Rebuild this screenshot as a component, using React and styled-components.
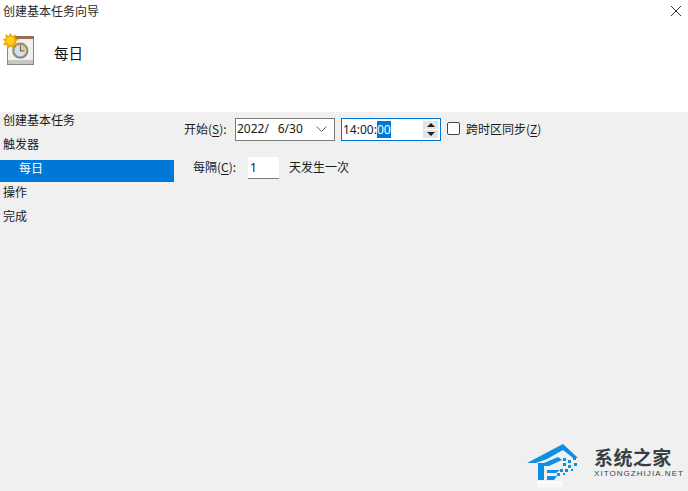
import styled, { createGlobalStyle } from 'styled-components';

const GlobalStyle = createGlobalStyle`
  html, body { margin: 0; padding: 0; background: #f0f0f0; }
  body { font-family: "Noto Sans CJK SC", "Liberation Sans", sans-serif; font-size: 12px; color: #1a1a1a; }
`;

const LATIN = '"Noto Sans", "Noto Sans CJK SC", sans-serif';

const Page = styled.div`
  position: relative;
  width: 688px;
  height: 491px;
  overflow: hidden;
  display: flex;
  flex-direction: column;
`;

const Header = styled.header`
  height: 112px;
  flex: none;
  background: #fff;
  padding: 2px 6px 0 3px;
  box-sizing: border-box;
`;

const TitleBar = styled.div`
  height: 18px;
  display: flex;
  align-items: center;
  justify-content: space-between;
`;

const Title = styled.span`
  font-size: 12px;
  line-height: 16px;
  color: #2b2b2b;
`;

const CloseButton = styled.button`
  width: 12px;
  height: 12px;
  padding: 0;
  border: 0;
  background: none;
  display: flex;
`;

const Banner = styled.div`
  display: flex;
  align-items: flex-start;
  gap: 19px;
  margin-top: 13px;
`;

const BannerTitle = styled.span`
  font-size: 14.5px;
  line-height: 20px;
  color: #111;
  padding-top: 10px;
`;

const Body = styled.div`
  flex: 1;
  display: flex;
  min-height: 0;
`;

const Sidebar = styled.nav`
  width: 174px;
  flex: none;
  display: flex;
  flex-direction: column;
  gap: 2px;
`;

const Step = styled.div`
  height: 22px;
  box-sizing: border-box;
  padding: 0 0 7px ${(p) => (p.$sub ? 19 : 3)}px;
  display: flex;
  align-items: center;
  font-size: 12px;
  color: ${(p) => (p.$active ? '#fff' : '#1a1a1a')};
  background: ${(p) => (p.$active ? '#0078d7' : 'transparent')};
`;

const Form = styled.main`
  flex: 1;
  display: flex;
  flex-direction: column;
  padding: 6px 0 0 10px;
  gap: 16px;
`;

const Row = styled.div`
  display: flex;
  align-items: center;
  height: ${(p) => p.$h}px;
  padding-left: ${(p) => p.$indent || 0}px;
`;

const Label = styled.label`
  font-size: 12px;
  line-height: 16px;
  width: ${(p) => p.$w}px;
  flex: none;
  white-space: nowrap;
  position: relative;
  top: -1px;
  u { text-underline-offset: 2px; }
`;

const DateBox = styled.div`
  width: 100px;
  height: 23px;
  box-sizing: border-box;
  border: 1px solid #7a7a7a;
  background: #fff;
  display: flex;
  align-items: center;
  justify-content: space-between;
  padding: 0 7px 2px 1px;
  font-size: 12px;
  word-spacing: 1.3px;
  white-space: pre;
  font-family: ${LATIN};
`;

const TimeBox = styled.div`
  width: 100px;
  height: 23px;
  margin-left: 6px;
  box-sizing: border-box;
  border: 1px solid #0078d7;
  background: #fff;
  display: flex;
  align-items: center;
  justify-content: space-between;
  padding: 0 2px 0 1px;
  font-size: 12px;
  font-family: ${LATIN};
`;

const Selected = styled.span`
  background: #0078d7;
  color: #fff;
  display: inline-block;
  height: 17px;
  line-height: 17px;
`;

const Spinner = styled.div`
  width: 15px;
  height: 17px;
  display: flex;
  flex-direction: column;
  gap: 1px;
`;

const SpinButton = styled.div`
  flex: 1;
  background: #e4e4e4;
  display: flex;
  align-items: center;
  justify-content: center;
`;

const Arrow = styled.i`
  width: 0;
  height: 0;
  border-left: 4px solid transparent;
  border-right: 4px solid transparent;
  ${(p) => (p.$down ? 'border-top: 4px solid #222;' : 'border-bottom: 4px solid #222;')}
`;

const Check = styled.span`
  width: 11px;
  height: 11px;
  margin: 0 6px 0 6px;
  border: 1px solid #444;
  border-radius: 2px;
  background: #fff;
  flex: none;
  position: relative;
  top: -1px;
`;

const NumberBox = styled.div`
  width: 31px;
  height: 22px;
  box-sizing: border-box;
  background: #fff;
  border-bottom: 1px solid #7a7a7a;
  padding: 2px 0 0 2px;
  font-size: 12px;
  margin-right: 10px;
  font-family: ${LATIN};
`;

const Watermark = styled.div`
  position: absolute;
  left: 527px;
  top: 443px;
  display: flex;
  gap: 7px;
`;

const BrandText = styled.div`
  display: flex;
  flex-direction: column;
  padding-top: 2px;
`;

const BrandName = styled.span`
  font-size: 19px;
  line-height: 24px;
  font-weight: 700;
  color: #3a3f42;
  letter-spacing: 0.4px;
  white-space: nowrap;
`;

const BrandUrl = styled.span`
  font-family: "Liberation Sans", sans-serif;
  font-size: 8px;
  line-height: 10px;
  color: #3a3f42;
  letter-spacing: 1.05px;
  white-space: nowrap;
`;

const ClockIcon = () => (
  <svg width="32" height="33" viewBox="0 0 32 33">
    <rect x="4.500" y="3.500" width="26" height="28" fill="#f1f1ec" stroke="#858581" />
    <rect x="4" y="3" width="27" height="3" fill="#9a6f58" />
    <rect x="5" y="27" width="25" height="4" fill="#c6c6c2" />
    <circle cx="17.300" cy="17.700" r="7" fill="#d6e0ea" stroke="#8f8c84" strokeWidth="2.200" />
    <path d="M18 12a6 6 0 0 1 5.500 6H18z" fill="#ecc982" />
    <path d="M17.300 12v6h4" fill="none" stroke="#5c5c5c" strokeWidth="1" />
    <path d="M7.500-.5l1.700 3.700 3.700-2-.9 4 4.100 1-3.300 2.500 2.500 3.300-4.100.2-.5 4.100-3.200-2.700-3.200 2.700-.4-4.100-4-.3 2.500-3.300L-1 6.200l4-1-.9-4.100 3.700 2z" fill="#f6a800" />
    <circle cx="7.500" cy="7.700" r="4" fill="#ffd02a" />
  </svg>
);

const LogoMark = () => (
  <svg width="60" height="48" viewBox="0 0 60 48">
    <defs>
      <linearGradient id="fade" x1="0" y1="0" x2="0" y2="1">
        <stop offset="0" stopColor="#ffffff" stopOpacity="0.9" />
        <stop offset="1" stopColor="#ffffff" stopOpacity="0" />
      </linearGradient>
    </defs>
    <path d="M0 20L36 1l15 14-5 0L36 7 20 16 9 20z" fill="#0e8fe6" />
    <path d="M11 20h6v17h-6zM17 20l14-6 4 3-13 6h-5zM20 27h13l-4 3h-9zM20 33h10l-3 4h-7z" fill="#0e8fe6" />
    <path d="M22 24h2v3h-2zM22 30h2v3h-2z" fill="#f0f0f0" />
    <g fill="#0e8fe6">
      <rect x="36" y="15" width="3" height="3" />
      <rect x="41" y="17" width="3" height="3" />
      <rect x="46" y="14" width="3" height="3" />
      <rect x="36" y="20" width="3" height="3" />
      <rect x="41" y="22" width="3" height="3" />
      <rect x="47" y="20" width="3" height="3" />
      <rect x="33" y="26" width="3" height="3" />
      <rect x="38" y="26" width="3" height="3" />
      <rect x="44" y="26" width="2" height="2" />
      <rect x="30" y="30" width="3" height="3" />
      <rect x="36" y="30" width="2" height="2" />
    </g>
    <rect x="10" y="38" width="26" height="10" fill="url(#fade)" />
  </svg>
);

export default function App() {
  return (
    <>
      <GlobalStyle />
      <Page>
        <Header>
          <TitleBar>
            <Title>创建基本任务向导</Title>
            <CloseButton aria-label="关闭">
              <svg width="12" height="12" viewBox="0 0 12 12">
                <path d="M1 1l10 10M11 1L1 11" stroke="#333" strokeWidth="1" />
              </svg>
            </CloseButton>
          </TitleBar>
          <Banner>
            <ClockIcon />
            <BannerTitle>每日</BannerTitle>
          </Banner>
        </Header>
        <Body>
          <Sidebar>
            <Step>创建基本任务</Step>
            <Step>触发器</Step>
            <Step $sub $active>每日</Step>
            <Step>操作</Step>
            <Step>完成</Step>
          </Sidebar>
          <Form>
            <Row $h={23}>
              <Label $w={51}>开始(<u>S</u>):</Label>
              <DateBox>
                <span>2022/  6/30</span>
                <svg width="11" height="6" viewBox="0 0 11 6">
                  <path d="M.5.5l5 5 5-5" fill="none" stroke="#666" />
                </svg>
              </DateBox>
              <TimeBox>
                <span>14:00:<Selected>00</Selected></span>
                <Spinner>
                  <SpinButton><Arrow /></SpinButton>
                  <SpinButton><Arrow $down /></SpinButton>
                </Spinner>
              </TimeBox>
              <Check />
              <Label>跨时区同步(<u>Z</u>)</Label>
            </Row>
            <Row $h={22} $indent={9}>
              <Label $w={55}>每隔(<u>C</u>):</Label>
              <NumberBox>1</NumberBox>
              <Label>天发生一次</Label>
            </Row>
          </Form>
        </Body>
        <Watermark>
          <LogoMark />
          <BrandText>
            <BrandName>系统之家</BrandName>
            <BrandUrl>XITONGZHIJIA.NET</BrandUrl>
          </BrandText>
        </Watermark>
      </Page>
    </>
  );
}
